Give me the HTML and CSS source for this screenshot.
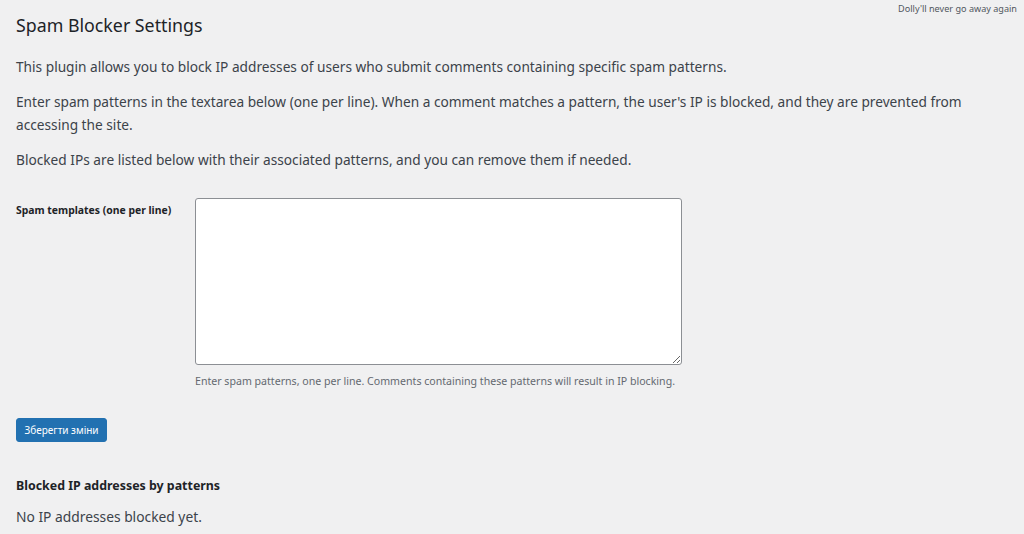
FILE: index.html
```html
<!DOCTYPE html>
<html lang="en">
<head>
<meta charset="utf-8">
<title>Spam Blocker Settings</title>
<link rel="stylesheet" href="styles.css">
</head>
<body>
<div class="dolly">Dolly'll never go away again</div>
<div class="wrap">
  <h1 class="title">Spam Blocker Settings</h1>
  <p class="para">This plugin allows you to block IP addresses of users who submit comments containing specific spam patterns.</p>
  <p class="para">Enter spam patterns in the textarea below (one per line). When a comment matches a pattern, the user's IP is blocked, and they are prevented from accessing the site.</p>
  <p class="para">Blocked IPs are listed below with their associated patterns, and you can remove them if needed.</p>
  <form class="form">
    <div class="row">
      <label class="label" for="tpl">Spam templates (one per line)</label>
      <div class="field">
        <textarea id="tpl" class="textarea"></textarea>
        <p class="desc">Enter spam patterns, one per line. Comments containing these patterns will result in IP blocking.</p>
      </div>
    </div>
    <div class="submit"><button type="button" class="btn">Зберегти зміни</button></div>
  </form>
  <h2 class="subtitle">Blocked IP addresses by patterns</h2>
  <p class="para empty">No IP addresses blocked yet.</p>
</div>
</body>
</html>
```
FILE: styles.css
```css
html, body {
  margin: 0;
  padding: 0;
  background: #f0f0f1;
  color: #1d2327;
  font-family: "Noto Sans", "Open Sans", sans-serif;
  height: 534px;
  overflow: hidden;
}
.dolly {
  position: absolute;
  right: 7px;
  top: 2px;
  font-size: 9.1px;
  color: #50575e;
}
.wrap {
  padding: 0 16px;
}
.title {
  margin: 0;
  padding-top: 13px;
  font-size: 17.8px;
  font-weight: 400;
  line-height: 24px;
  color: #1d2327;
}
.para {
  margin: 0;
  font-size: 13.7px;
  line-height: 23px;
  color: #3c434a;
}
.title + .para { margin-top: 18px; }
.para + .para { margin-top: 12px; }
.form { margin-top: 27px; }
.row {
  display: flex;
}
.label {
  width: 179px;
  flex: none;
  font-size: 10.4px;
  font-weight: 700;
  color: #1d2327;
  padding-top: 5px;
}
.field { display: flex; flex-direction: column; }
.textarea {
  width: 487px;
  height: 167px;
  box-sizing: border-box;
  margin: 0;
  border: 1px solid #8c8f94;
  border-radius: 3px;
  background: #fff;
  resize: vertical;
  display: block;
}
.desc {
  margin: 8px 0 0;
  font-size: 10.6px;
  color: #646970;
  line-height: 16px;
}
.submit { margin-top: 29px; }
.btn {
  background: #2271b1;
  color: #fff;
  border: 1px solid #2271b1;
  border-radius: 3px;
  font-family: inherit;
  font-size: 10px;
  height: 24px;
  padding: 0;
  width: 91px;
  white-space: nowrap;
  display: block;
}
.subtitle {
  margin: 34px 0 0;
  font-size: 12.4px;
  font-weight: 700;
  line-height: 20px;
  color: #1d2327;
}
.empty { margin-top: 9px; font-size: 13.8px; }
```
